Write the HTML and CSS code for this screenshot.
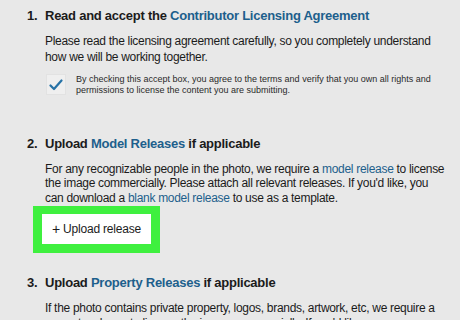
FILE: index.html
```html
<!DOCTYPE html>
<html>
<head>
<meta charset="utf-8">
<link rel="stylesheet" href="styles.css">
</head>
<body>
<div class="page">
  <section class="step step-1">
    <div class="num">1.</div>
    <div class="body">
      <h2 class="title">Read and accept the <a class="link">Contributor Licensing Agreement</a></h2>
      <p class="text">Please read the licensing agreement carefully, so you completely understand<br>how we will be working together.</p>
      <div class="check-row">
        <span class="checkbox">
          <svg width="14" height="12" viewBox="0 0 14 12"><path d="M1.5 6.5 L5 10 L12.5 1.5" fill="none" stroke="#2672a6" stroke-width="2.2" stroke-linecap="round" stroke-linejoin="round"/></svg>
        </span>
        <span class="small">By checking this accept box, you agree to the terms and verify that you own all rights and<br>permissions to license the content you are submitting.</span>
      </div>
    </div>
  </section>
  <section class="step step-2">
    <div class="num">2.</div>
    <div class="body">
      <h2 class="title">Upload <a class="link">Model Releases</a> if applicable</h2>
      <p class="text text-2">For any recognizable people in the photo, we require a <a class="link">model release</a> to license<br>the image commercially. Please attach all relevant releases. If you'd like, you<br>can download a <a class="link">blank model release</a> to use as a template.</p>
    </div>
  </section>
  <div class="highlight">
    <button class="upload"><span class="plus">+</span> Upload release</button>
  </div>
  <section class="step step-3">
    <div class="num">3.</div>
    <div class="body">
      <h2 class="title">Upload <a class="link">Property Releases</a> if applicable</h2>
      <p class="text text-2">If the photo contains private property, logos, brands, artwork, etc, we require a<br>property release to license the image commercially. If you'd like, you can<br>download a blank property release to use as a template.</p>
    </div>
  </section>
</div>
</body>
</html>
```
FILE: styles.css
```css
html, body {
  margin: 0;
  padding: 0;
  background: #e8e8e8;
}
body {
  width: 460px;
  height: 320px;
  overflow: hidden;
  font-family: "Liberation Sans", Arial, sans-serif;
  color: #1b1b1b;
}
.page {
  padding: 6px 0 0 0;
}
.step {
  display: grid;
  grid-template-columns: 18px 1fr;
  padding-left: 27px;
  padding-right: 4px;
}
.num {
  font-weight: bold;
  font-size: 13px;
  line-height: 20px;
  letter-spacing: -0.25px;
}
.title {
  margin: 0;
  font-size: 13px;
  line-height: 20px;
  font-weight: bold;
  letter-spacing: -0.25px;
  white-space: nowrap;
}
.link {
  color: #1d5f8c;
  text-decoration: none;
}
.text {
  margin: 7px 0 0 0;
  font-size: 12px;
  line-height: 16px;
  letter-spacing: -0.3px;
  white-space: nowrap;
}
.text-2 {
  margin-top: 7.5px;
  line-height: 14.8px;
}
.check-row {
  display: flex;
  align-items: flex-start;
  gap: 10px;
  margin-top: 8px;
  padding-left: 1px;
}
.checkbox {
  flex: none;
  width: 20px;
  height: 21px;
  margin-top: 1px;
  background: #efefef;
  border: 1px solid #e2e2e2;
  box-sizing: border-box;
  display: flex;
  align-items: center;
  justify-content: center;
}
.small {
  font-size: 9px;
  line-height: 11px;
  padding-top: 1px;
  color: #2a2a2a;
  white-space: nowrap;
}
.step-2 {
  margin-top: 38px;
}
.highlight {
  margin-left: 33px;
  width: 127px;
  height: 47px;
  box-sizing: border-box;
  padding: 8px 9px 9px 9px;
  background: #3ff03f;
}
.upload {
  display: flex;
  align-items: center;
  justify-content: center;
  width: 100%;
  height: 100%;
  border: none;
  background: #ffffff;
  font-family: "Liberation Sans", Arial, sans-serif;
  font-size: 12px;
  letter-spacing: -0.2px;
  color: #1b1b1b;
  padding: 0;
  gap: 3px;
}
.plus {
  font-size: 14px;
  line-height: 1;
}
.step-3 {
  margin-top: 20px;
}
.step-3 .text {
  margin-top: 8px;
}
```
